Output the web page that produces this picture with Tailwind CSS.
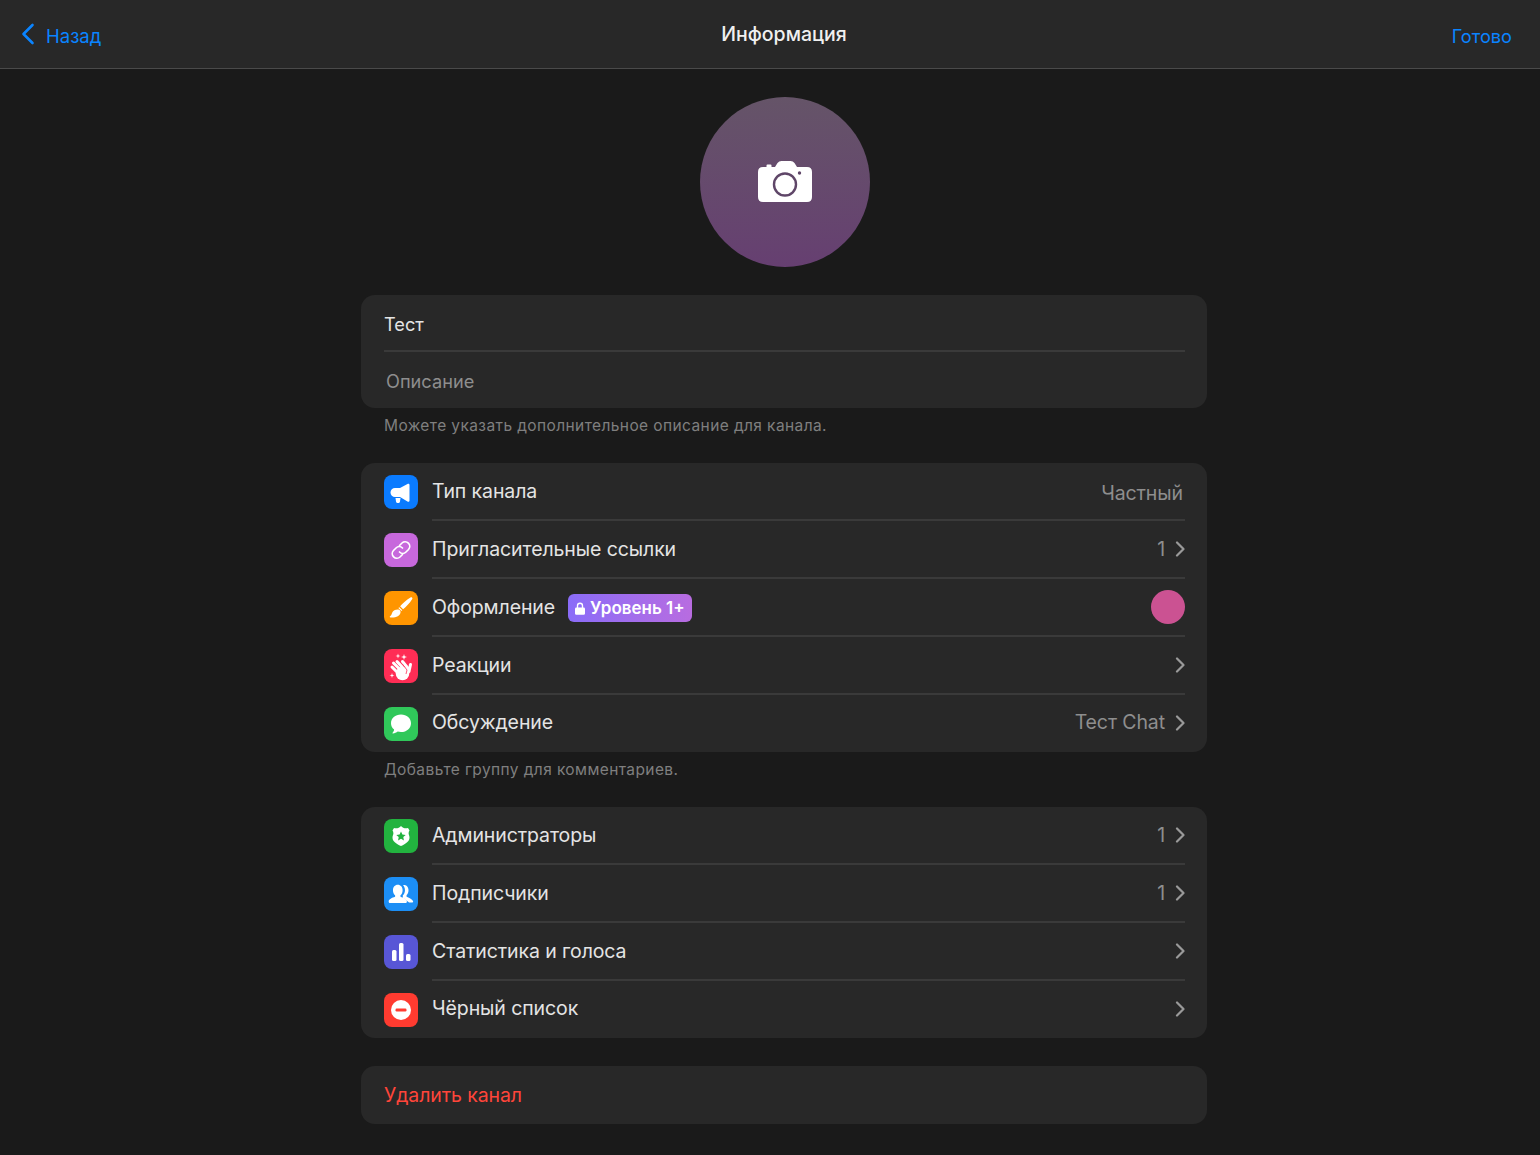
<!DOCTYPE html>
<html lang="ru">
<head>
  <meta charset="UTF-8">
  <meta name="viewport" content="width=device-width, initial-scale=1.0">
  <title>Информация</title>
  <script src="https://cdn.jsdelivr.net/npm/@tailwindcss/browser@4"></script>
</head>
<body class="bg-[#1a1a1a] min-h-screen font-['Inter',sans-serif] text-[19.5px] tracking-[-0.1px] text-[#e4e4e4] overflow-hidden">
  <!-- Navigation -->
  <nav class="h-[69px] bg-[#282828] border-b border-[#4a4a4a] pl-[21px] pr-[28px] flex items-center justify-between relative tracking-normal">
    <div class="flex items-center text-[#0a84ff] text-[18.5px]">
      <svg class="w-[14px] h-[22px] mr-[11px]" viewBox="0 0 14 22" fill="none" stroke="#0a84ff" stroke-width="2.6" stroke-linecap="round" stroke-linejoin="round"><path d="M11.5 2 2.5 11l9 9"/></svg>
      <span class="mt-[6px]">Назад</span>
    </div>
    <span class="absolute left-[28px] right-0 text-center font-medium text-[19.5px] text-[#f0f0f0] mt-[2px]">Информация</span>
    <span class="text-[#0a84ff] text-[18.2px] mt-[6px]">Готово</span>
  </nav>

  <main class="w-[846px] ml-[361px]">
    <!-- Avatar -->
    <div class="w-[170px] h-[170px] mt-[28px] ml-[339px] rounded-full bg-gradient-to-b from-[#655468] to-[#663f71] flex items-center justify-center">
      <svg class="w-[54px] h-[42px] -mt-[3px]" viewBox="0 0 54 42">
        <path fill="#fff" d="M5 7h3.500V5.500q0-1 1-1h3q1 0 1 1V7h3.500l2.500-4q1.500-2 4-2h9q2.500 0 4 2l2.500 4H49q5 0 5 5v25q0 5-5 5H5q-5 0-5-5V12q0-5 5-5z"/>
        <circle cx="27" cy="24.500" r="11" fill="#fff" stroke="#5f4668" stroke-width="2.400"/>
        <circle cx="41.500" cy="13" r="1.700" fill="#5f4668"/>
      </svg>
    </div>

    <!-- Name and description -->
    <section class="mt-[28px] bg-[#282828] rounded-[14px] pl-[23px] pr-[22px] tracking-normal">
      <div class="h-[57px] flex items-center border-b-2 border-[#3a3a3a]"><span class="mt-[5px] text-[18.2px]">Тест</span></div>
      <div class="h-[56px] pt-[3px] flex items-center pl-[2px] text-[#8e8e8e] text-[18.2px]">Описание</div>
    </section>
    <p class="pl-[23px] mt-[8px] h-[19px] leading-[20px] text-[15.5px] text-[#7f7f7f] tracking-[0.4px]">Можете указать дополнительное описание для канала.</p>

    <!-- Channel settings -->
    <section class="mt-[28px] bg-[#282828] rounded-[14px] pl-[23px] pr-[22px]">
      <div class="h-[58px] flex items-center">
        <div class="w-[34px] h-[34px] rounded-[8px] bg-[#0a7bff] shrink-0">
          <svg class="w-[34px] h-[34px]" viewBox="0 0 34 34" fill="#fff"><path d="M23.500 9c1-.6 2 0 2 1v15.500c0 1-1 1.600-2 1L16 22h-5a4.500 4.500 0 0 1 0-9h5z"/><path d="M11.500 23h5l-.5 3.500c-.2 1-1 1.500-2 1.500s-1.800-.5-2-1.500z"/></svg>
        </div>
        <div class="flex-1 h-full ml-[14px] border-b-2 border-[#3a3a3a] flex items-center justify-between">
          <span class="mt-[2px]">Тип канала</span><span class="text-[#8e8e8e] mr-[2px] mt-[5px]">Частный</span>
        </div>
      </div>
      <div class="h-[58px] flex items-center">
        <div class="w-[34px] h-[34px] rounded-[8px] bg-[#c768dc] flex items-center justify-center shrink-0">
          <svg class="w-[24px] h-[24px]" viewBox="0 0 24 24" fill="none" stroke="#fff" stroke-width="1.700" stroke-linecap="round"><path d="M10.500 7.500 13 5a4.600 4.600 0 0 1 6.500 6.500L17 14a4.600 4.600 0 0 1-6.500 0"/><path d="M13.500 16.500 11 19a4.600 4.600 0 0 1-6.500-6.500L7 10a4.600 4.600 0 0 1 6.500 0"/></svg>
        </div>
        <div class="flex-1 h-full ml-[14px] border-b-2 border-[#3a3a3a] flex items-center justify-between">
          <span class="mt-[2px]">Пригласительные ссылки</span>
          <span class="flex items-center gap-[10px] text-[#8e8e8e] mt-[1px]">1
            <svg class="w-[10px] h-[16px] -mt-[2px]" viewBox="0 0 10 16" fill="none" stroke="#9a9a9a" stroke-width="2.200" stroke-linecap="round" stroke-linejoin="round"><path d="m2 1.500 6.500 6.500L2 14.500"/></svg>
          </span>
        </div>
      </div>
      <div class="h-[58px] flex items-center">
        <div class="w-[34px] h-[34px] rounded-[8px] bg-[#ff9500] shrink-0">
          <svg class="w-[34px] h-[34px]" viewBox="0 0 34 34" fill="#fff"><path d="M28 6.500c.6.5.5 1 .1 1.700-2.500 4-6 7.500-9 10l-3-3c2.500-3 6.500-6.500 10-8.500.8-.4 1.400-.6 1.900-.2z"/><path d="m15.300 16.200 3 3-.9.9-3-3z"/><path d="M13.500 18.500c2-.3 3.500 1.200 3 3.200-.7 3-4 5-10 4.700-.8 0-1-.7-.4-1.100 1.800-1.300 1.400-3 2.600-4.600 1.200-1.500 3-2 4.800-2.200z"/></svg>
        </div>
        <div class="flex-1 h-full ml-[14px] border-b-2 border-[#3a3a3a] flex items-center justify-between">
          <div class="flex items-center mt-[2px]">
            <span>Оформление</span>
            <span class="ml-[13px] h-[28px] px-[7px] rounded-[6px] bg-gradient-to-r from-[#8a6cf8] to-[#b86ce0] flex items-center gap-[5px] text-[#fff] font-semibold text-[17px] tracking-normal">
              <svg class="w-[10px] h-[13px]" viewBox="0 0 11 14" fill="#fff"><path d="M2 6V4a3.500 3.500 0 0 1 7 0v2h.500q1.500 0 1.500 1.500v5q0 1.500-1.500 1.500h-8Q0 14 0 12.500v-5Q0 6 1.500 6zm1.500 0h4V4a2 2 0 0 0-4 0z"/></svg>
              <span class="mt-[1px]">Уровень 1+</span>
            </span>
          </div>
          <span class="w-[34px] h-[34px] rounded-full bg-[#cb5292]"></span>
        </div>
      </div>
      <div class="h-[58px] flex items-center">
        <div class="w-[34px] h-[34px] rounded-[8px] bg-[#ff2d55] shrink-0">
          <svg class="w-[34px] h-[34px]" viewBox="0 0 34 34">
            <g stroke="#fff" stroke-width="3" stroke-linecap="round" fill="none"><path d="m8 18 7 7"/><path d="m9.500 14 8.500 8.500"/><path d="m13 12.500 7.500 8"/><path d="m18.500 12.500 6 7.500"/><path d="m26.500 15.500-1.500 7"/></g>
            <circle cx="18.500" cy="24.500" r="6.800" fill="#fff"/>
            <path d="m18.200 14.800 4.800 6.200-1 4" stroke="#ff2d55" stroke-width=".8" fill="none"/>
            <path fill="#fff" d="m14 4.500.6 1.900 1.900.6-1.900.6-.6 1.900-.6-1.900-1.900-.6 1.900-.6zM20 5l.7 2.300 2.300.7-2.300.7-.7 2.300-.7-2.300-2.300-.7 2.300-.7zM8 24l.6 1.900 1.900.6-1.900.6-.6 1.900-.6-1.900-1.900-.6 1.900-.6z"/>
          </svg>
        </div>
        <div class="flex-1 h-full ml-[14px] border-b-2 border-[#3a3a3a] flex items-center justify-between">
          <span class="mt-[2px]">Реакции</span>
          <svg class="w-[10px] h-[16px] -mt-[1px]" viewBox="0 0 10 16" fill="none" stroke="#9a9a9a" stroke-width="2.200" stroke-linecap="round" stroke-linejoin="round"><path d="m2 1.500 6.500 6.500L2 14.500"/></svg>
        </div>
      </div>
      <div class="h-[57px] flex items-center">
        <div class="w-[34px] h-[34px] rounded-[8px] bg-[#30c85a] flex items-center justify-center shrink-0">
          <svg class="w-[26px] h-[26px]" viewBox="0 0 26 26" fill="#fff"><path d="M13 3.500c5.800 0 10 3.700 10 8.800s-4.200 8.800-10 8.800c-1.200 0-2.300-.2-3.300-.5-1.300 1-3 1.800-4.700 1.900-.5 0-.7-.4-.4-.8.8-.9 1.400-2 1.500-3.200C4 17 3 14.800 3 12.300c0-5.100 4.200-8.800 10-8.800z"/></svg>
        </div>
        <div class="flex-1 h-full ml-[14px] flex items-center justify-between">
          <span class="-mt-[1px]">Обсуждение</span>
          <span class="flex items-center gap-[10px] text-[#8e8e8e] -mt-[2px]">Тест Chat
            <svg class="w-[10px] h-[16px]" viewBox="0 0 10 16" fill="none" stroke="#9a9a9a" stroke-width="2.200" stroke-linecap="round" stroke-linejoin="round"><path d="m2 1.500 6.500 6.500L2 14.500"/></svg>
          </span>
        </div>
      </div>
    </section>
    <p class="pl-[23px] mt-[8px] h-[19px] leading-[20px] text-[15.5px] text-[#7f7f7f] tracking-[0.4px]">Добавьте группу для комментариев.</p>

    <!-- Members -->
    <section class="mt-[28px] bg-[#282828] rounded-[14px] pl-[23px] pr-[22px]">
      <div class="h-[58px] flex items-center">
        <div class="w-[34px] h-[34px] rounded-[8px] bg-[#22b33f] flex items-center justify-center shrink-0">
          <svg class="w-[24px] h-[24px]" viewBox="0 0 24 24"><path fill="#fff" d="M12 2c1.300 1.500 3 2.300 5 2.300.7 0 1.300-.1 2-.3l1.500 2.500c-.6.800-.9 1.700-.9 2.700 0 1.200.9 2.500.9 4.200 0 4-3.500 6-8.500 8.600-5-2.600-8.500-4.600-8.500-8.600 0-1.700.9-3 .9-4.200 0-1-.3-1.900-.9-2.700L5 4c.7.200 1.300.3 2 .3 2 0 3.700-.8 5-2.300z"/><path fill="#22b33f" d="m12 7.500 1.400 3 3.300.4-2.400 2.200.6 3.300-2.900-1.600-2.900 1.600.6-3.300-2.400-2.200 3.300-.4z"/></svg>
        </div>
        <div class="flex-1 h-full ml-[14px] border-b-2 border-[#3a3a3a] flex items-center justify-between">
          <span class="mt-[2px]">Администраторы</span>
          <span class="flex items-center gap-[10px] text-[#8e8e8e] mt-[1px]">1
            <svg class="w-[10px] h-[16px] -mt-[2px]" viewBox="0 0 10 16" fill="none" stroke="#9a9a9a" stroke-width="2.200" stroke-linecap="round" stroke-linejoin="round"><path d="m2 1.500 6.500 6.500L2 14.500"/></svg>
          </span>
        </div>
      </div>
      <div class="h-[58px] flex items-center">
        <div class="w-[34px] h-[34px] rounded-[8px] bg-[#1c8ef5] flex items-center justify-center shrink-0">
          <svg class="w-[30px] h-[30px] mt-[1px]" viewBox="0 0 28 28" fill="#fff"><path d="M11 4.500c2.700 0 4.500 2.200 4.500 5 0 2-.8 3.700-2 4.800v1.400c2.800 1 6 2.300 6 4.300 0 .9-.6 1.500-1.500 1.500H4c-.9 0-1.500-.6-1.500-1.500 0-2 3.200-3.300 6-4.300v-1.400c-1.200-1.100-2-2.800-2-4.800 0-2.800 1.800-5 4.500-5z"/><path d="M16.500 4.700c2.500-.3 4.500 1.900 4.500 4.800 0 1.900-.7 3.500-1.800 4.600v1.500c2 .8 5.300 2.500 6 4 .4.900-.1 1.400-.9 1.400h-2.800l-5-4-.8-.4v-2.300c1.200-1.100 2-2.800 2-4.800 0-1.800-.6-3.400-1.800-4.600z"/></svg>
        </div>
        <div class="flex-1 h-full ml-[14px] border-b-2 border-[#3a3a3a] flex items-center justify-between">
          <span class="mt-[2px]">Подписчики</span>
          <span class="flex items-center gap-[10px] text-[#8e8e8e] mt-[1px]">1
            <svg class="w-[10px] h-[16px] -mt-[2px]" viewBox="0 0 10 16" fill="none" stroke="#9a9a9a" stroke-width="2.200" stroke-linecap="round" stroke-linejoin="round"><path d="m2 1.500 6.500 6.500L2 14.500"/></svg>
          </span>
        </div>
      </div>
      <div class="h-[58px] flex items-center">
        <div class="w-[34px] h-[34px] rounded-[8px] bg-[#5856d6] flex items-center justify-center shrink-0">
          <svg class="w-[24px] h-[24px]" viewBox="0 0 24 24" fill="#fff"><rect x="3" y="10" width="4.500" height="11" rx="1.500"/><rect x="10" y="3" width="4.500" height="18" rx="1.500"/><rect x="17" y="14" width="4.500" height="7" rx="1.500"/></svg>
        </div>
        <div class="flex-1 h-full ml-[14px] border-b-2 border-[#3a3a3a] flex items-center justify-between">
          <span class="mt-[2px]">Статистика и голоса</span>
          <svg class="w-[10px] h-[16px] -mt-[1px]" viewBox="0 0 10 16" fill="none" stroke="#9a9a9a" stroke-width="2.200" stroke-linecap="round" stroke-linejoin="round"><path d="m2 1.500 6.500 6.500L2 14.500"/></svg>
        </div>
      </div>
      <div class="h-[57px] flex items-center">
        <div class="w-[34px] h-[34px] rounded-[8px] bg-[#ff3b30] flex items-center justify-center shrink-0">
          <svg class="w-[24px] h-[24px]" viewBox="0 0 24 24"><circle cx="12" cy="12" r="10" fill="#fff"/><rect x="6.500" y="10.500" width="11" height="3" rx="1.200" fill="#ff3b30"/></svg>
        </div>
        <div class="flex-1 h-full ml-[14px] flex items-center justify-between">
          <span class="-mt-[1px]">Чёрный список</span>
          <svg class="w-[10px] h-[16px] -mt-[2px]" viewBox="0 0 10 16" fill="none" stroke="#9a9a9a" stroke-width="2.200" stroke-linecap="round" stroke-linejoin="round"><path d="m2 1.500 6.500 6.500L2 14.500"/></svg>
        </div>
      </div>
    </section>

    <!-- Delete -->
    <section class="mt-[28px] h-[58px] bg-[#282828] rounded-[14px] pl-[23px] flex items-center text-[#ff453a]">
      <span class="mt-[1px]">Удалить канал</span>
    </section>
  </main>
</body>
</html>
